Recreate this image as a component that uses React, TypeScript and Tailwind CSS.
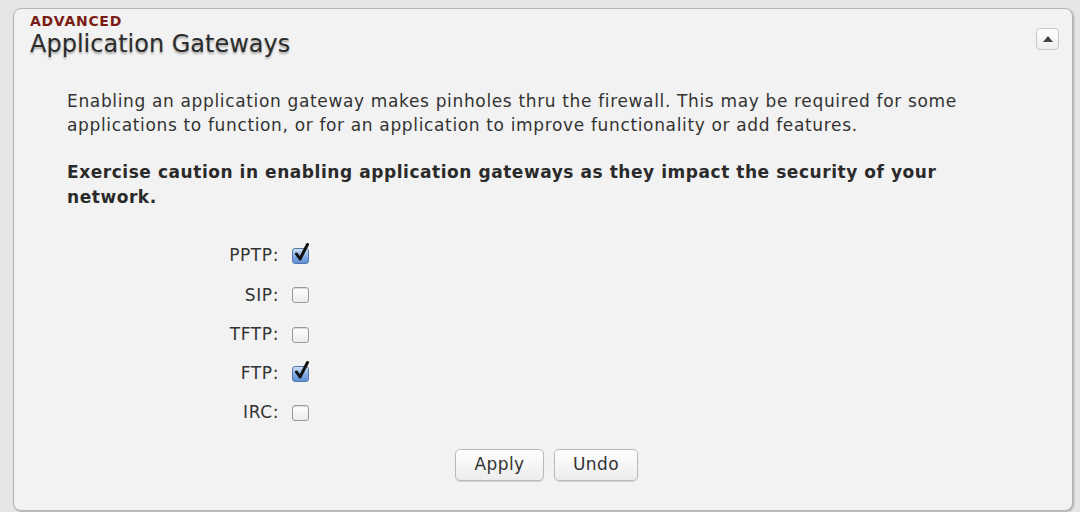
import { useState } from "react";

type Gateway = { name: string; enabled: boolean };

const initial: Gateway[] = [
  { name: "PPTP", enabled: true },
  { name: "SIP", enabled: false },
  { name: "TFTP", enabled: false },
  { name: "FTP", enabled: true },
  { name: "IRC", enabled: false },
];

// Aqua-style checkbox: grey frame when off, blue gel with a heavy tick when on.
function Check({ checked, onChange }: { checked: boolean; onChange: () => void }) {
  return (
    <button
      type="button"
      onClick={onChange}
      className={`relative h-[16px] w-[17px] rounded-[3px] border ${
        checked
          ? "border-[#5577ab] bg-gradient-to-b from-[#cfe0f6] via-[#86ade3] to-[#5f90d8]"
          : "border-[#9a9a9a] bg-gradient-to-b from-[#ffffff] to-[#ececec] shadow-[inset_0_1px_1px_rgba(0,0,0,0.15)]"
      }`}
    >
      {checked && (
        <svg
          viewBox="0 0 16 19"
          className="absolute -top-[6px] left-[1px] h-[19px] w-[16px]"
          fill="none"
        >
          <path d="M2.5 11 L6 16 L13.5 1.5" stroke="#111" strokeWidth="3" strokeLinecap="round" strokeLinejoin="round" />
        </svg>
      )}
    </button>
  );
}

function PlainButton({ width, children }: { width: number; children: React.ReactNode }) {
  return (
    <button
      type="button"
      style={{ width }}
      className="h-[32px] rounded-[5px] border border-[#b9b9b9] bg-gradient-to-b from-[#ffffff] to-[#ececec] text-[17px] tracking-[0.4px] text-[#333] shadow-[0_1px_1px_rgba(0,0,0,0.12)]"
    >
      {children}
    </button>
  );
}

export default function App() {
  const [gateways, setGateways] = useState(initial);

  const toggle = (name: string) =>
    setGateways((g) => g.map((x) => (x.name === name ? { ...x, enabled: !x.enabled } : x)));

  return (
    <div
      className="h-[512px] w-[1080px] overflow-hidden bg-[#e6e6e6] pl-[13px] pr-[7px] pt-[8px]"
      style={{ fontFamily: '"DejaVu Sans", Verdana, sans-serif' }}
    >
      <section className="h-[503px] rounded-[8px] border border-[#b4b4b4] bg-[#f2f2f2] shadow-[1px_1px_2px_rgba(0,0,0,0.25)]">
        <header className="flex items-start justify-between pl-[16px] pr-[13px] pt-[3px]">
          <div>
            <div className="text-[14px] font-bold leading-[18px] tracking-[0.7px] text-[#7b1d14]">ADVANCED</div>
            <h2 className="text-[24px] leading-[28px] text-[#2b2b2b] [text-shadow:0_2px_2px_rgba(0,0,0,0.3)]">
              Application Gateways
            </h2>
          </div>
          <button
            type="button"
            className="mt-[16px] flex h-[22px] w-[23px] items-center justify-center rounded-[4px] border border-[#c9c9c9] bg-gradient-to-b from-[#ffffff] to-[#eeeeee]"
          >
            <span className="h-0 w-0 border-x-[5px] border-b-[6px] border-x-transparent border-b-[#444]" />
          </button>
        </header>

        <div className="w-[960px] pl-[53px] pt-[31px] text-[17px] leading-[24px] tracking-[0.65px] text-[#333]">
          <p>
            Enabling an application gateway makes pinholes thru the firewall. This may be required for some
            applications to function, or for an application to improve functionality or add features.
          </p>
          <p className="mt-[23px] font-bold leading-[25px] tracking-[0.55px] text-[#2a2a2a]">
            Exercise caution in enabling application gateways as they impact the security of your network.
          </p>
        </div>

        <div className="mt-[37px] flex flex-col gap-[21.3px]">
          {gateways.map((g) => (
            <label key={g.name} className="flex h-[18px] items-center text-[17px] tracking-[0.6px] text-[#333]">
              <span className="w-[265px] text-right">{g.name}:</span>
              <span className="ml-[13px] flex items-center">
                <Check checked={g.enabled} onChange={() => toggle(g.name)} />
              </span>
            </label>
          ))}
        </div>

        <div className="mt-[27px] flex justify-center gap-[10px] pl-[7px]">
          <PlainButton width={89}>Apply</PlainButton>
          <PlainButton width={84}>Undo</PlainButton>
        </div>
      </section>
    </div>
  );
}
